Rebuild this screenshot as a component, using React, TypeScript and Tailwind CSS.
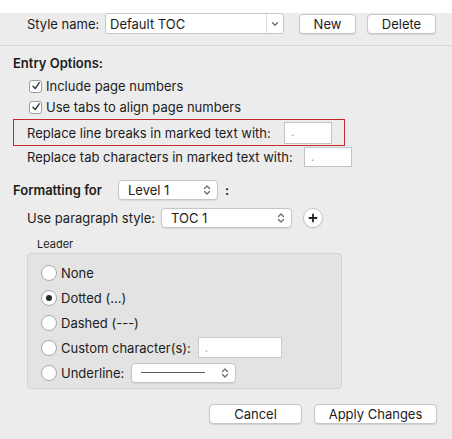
import type { ReactNode } from 'react';

const font = { fontFamily: 'Inter, "Noto Sans", sans-serif' };

function UpDown({ className = '' }: { className?: string }) {
  return (
    <svg width="8" height="12" viewBox="0 0 8 12" className={className} fill="none" stroke="#6b6b6b" strokeWidth="1.3" strokeLinecap="round" strokeLinejoin="round">
      <path d="M1.5 4.5 L4 2 L6.5 4.5" />
      <path d="M1.5 7.5 L4 10 L6.5 7.5" />
    </svg>
  );
}

function Checkbox() {
  return (
    <span className="flex size-[13px] items-center justify-center rounded-[3px] border border-[#9c9c9c] bg-white">
      <svg width="10" height="10" viewBox="0 0 10 10" fill="none" stroke="#333" strokeWidth="1.4" strokeLinecap="round" strokeLinejoin="round">
        <path d="M2 5.2 L4.2 7.6 L8.2 1.8" />
      </svg>
    </span>
  );
}

function Radio({ checked, children }: { checked?: boolean; children: ReactNode }) {
  return (
    <div className="flex h-[25px] items-center">
      <span className="flex size-[16px] items-center justify-center rounded-full border border-[#a9a9a9] bg-white">
        {checked && <span className="size-[6px] rounded-full bg-[#2a2a2a]" />}
      </span>
      <span className="ml-[4px]">{children}</span>
    </div>
  );
}

function Popup({ width, label, children }: { width: string; label?: string; children?: ReactNode }) {
  return (
    <div className={`flex h-[20px] items-center justify-between rounded-[4px] border border-[#c6c6c6] bg-white pr-[6px] pl-[9px] shadow-[0_1px_1px_rgba(0,0,0,0.08)] ${width}`}>
      {label ? <span>{label}</span> : children}
      <UpDown />
    </div>
  );
}

function Button({ width, children }: { width: string; children: ReactNode }) {
  return (
    <button
      type="button"
      className={`flex h-[20px] items-center justify-center rounded-[4px] border border-[#c6c6c6] bg-white shadow-[0_1px_1px_rgba(0,0,0,0.1)] ${width}`}
    >
      {children}
    </button>
  );
}

function Field({ width, height }: { width: string; height: string }) {
  return (
    <div className={`flex items-center border border-[#c3c3c3] bg-white pl-[6px] text-[11px] leading-none text-[#7aa3d6] ${width} ${height}`}>
      .
    </div>
  );
}

export default function App() {
  return (
    <div style={font} className="h-[439px] w-[452px] bg-[#ececec] text-[13px] leading-[16px] text-[#1c1c1c]">
      <div className="flex h-[21px] items-center pt-0 pl-[27px] mt-[13px]">
        <span className="w-[78px]">Style name:</span>
        <div className="flex h-[21px] w-[179px] items-center rounded-[3px] border border-[#c6c6c6] bg-white">
          <span className="flex-1 pl-[4px]">Default TOC</span>
          <span className="flex h-full w-[17px] items-center justify-center border-l border-[#e0e0e0]">
            <svg width="8" height="6" viewBox="0 0 8 6" fill="none" stroke="#6b6b6b" strokeWidth="1.3" strokeLinecap="round" strokeLinejoin="round">
              <path d="M1.5 1.8 L4 4.2 L6.5 1.8" />
            </svg>
          </span>
        </div>
        <div className="ml-[15px]">
          <Button width="w-[57px]">New</Button>
        </div>
        <div className="ml-[11px]">
          <Button width="w-[69px]">Delete</Button>
        </div>
      </div>

      <div className="mt-[11px] border-b border-[#d6d6d6]" />

      <div className="flex flex-col pt-[9px] pl-[13px]">
        <div className="flex h-[16px] items-center font-semibold">Entry Options:</div>

        <div className="mt-[5px] flex h-[20px] items-center pl-[16px]">
          <Checkbox />
          <span className="ml-[4px]">Include page numbers</span>
        </div>
        <div className="mt-[1px] flex h-[20px] items-center pl-[16px]">
          <Checkbox />
          <span className="ml-[4px]">Use tabs to align page numbers</span>
        </div>

        <div className="mt-[2px] flex h-[27px] w-[332px] items-center border border-[#c62a2a] pl-[13px]">
          <span className="w-[257px]">Replace line breaks in marked text with:</span>
          <Field width="w-[48px]" height="h-[22px]" />
        </div>

        <div className="mt-[1px] flex h-[20px] items-center pl-[14px]">
          <span className="w-[277px]">Replace tab characters in marked text with:</span>
          <Field width="w-[48px]" height="h-[20px]" />
        </div>

        <div className="mt-[13px] flex h-[20px] items-center">
          <span className="w-[105px] font-semibold">Formatting for</span>
          <Popup width="w-[100px]" label="Level 1" />
          <span className="ml-[7px] font-semibold">:</span>
        </div>

        <div className="mt-[8px] flex h-[20px] items-center pl-[14px]">
          <span className="w-[134px]">Use paragraph style:</span>
          <Popup width="w-[131px]" label="TOC 1" />
          <span className="ml-[11px] flex size-[20px] items-center justify-center rounded-full border border-[#c6c6c6] bg-white shadow-[0_1px_1px_rgba(0,0,0,0.08)]">
            <svg width="10" height="10" viewBox="0 0 10 10" stroke="#222" strokeWidth="1.8" strokeLinecap="round">
              <path d="M5 1.5 V8.5 M1.5 5 H8.5" />
            </svg>
          </span>
        </div>

        <div className="mt-[9px] flex h-[14px] items-center pl-[24px] text-[11px]">Leader</div>

        <div className="mt-[2px] ml-[14px] h-[136px] w-[315px] rounded-[4px] border border-[#d3d3d3] bg-[#e3e3e3] pt-[6px] pl-[13px]">
          <Radio>None</Radio>
          <Radio checked>Dotted (...)</Radio>
          <Radio>Dashed (---)</Radio>
          <div className="flex items-center">
            <Radio>Custom character(s):</Radio>
            <div className="ml-[7px]">
              <div className="flex h-[21px] w-[84px] items-center border border-[#c8c8c8] bg-white pl-[6px] text-[11px] text-[#a0a0a0]">.</div>
            </div>
          </div>
          <div className="flex items-center">
            <Radio>Underline:</Radio>
            <div className="ml-[7px]">
              <Popup width="w-[105px]">
                <span className="block h-[1px] w-[64px] bg-[#5a5a5a]" />
              </Popup>
            </div>
          </div>
        </div>
      </div>

      <div className="mt-[15px] flex justify-end gap-[12px] pr-[15px]">
        <Button width="w-[93px]">Cancel</Button>
        <Button width="w-[123px]">Apply Changes</Button>
      </div>
    </div>
  );
}
